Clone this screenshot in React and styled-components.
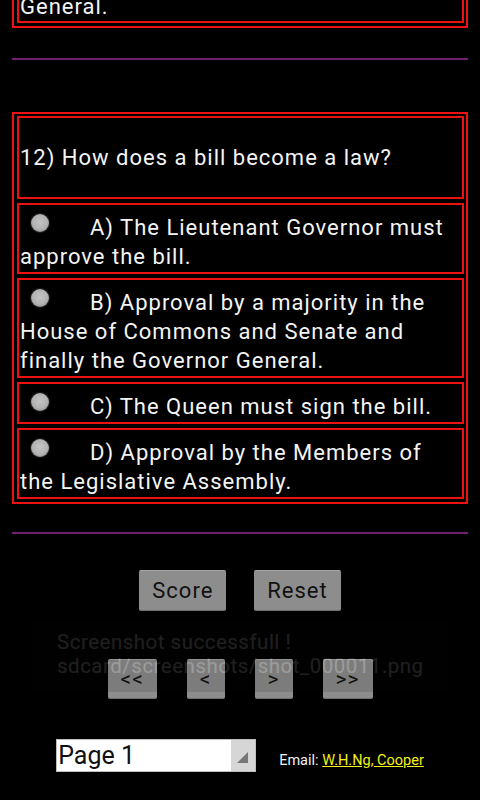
import React from 'react'
import styled, { createGlobalStyle } from 'styled-components'

const GlobalStyle = createGlobalStyle`
    html, body {
        margin: 0;
        padding: 0;
        background: #000;
    }
    body {
        width: 480px;
        height: 800px;
        overflow: hidden;
        font-family: Roboto, "Liberation Sans", sans-serif;
        color: #fff;
    }
`

const Page = styled.div`
    position: relative;
    width: 480px;
    height: 800px;
    overflow: hidden;
    display: flex;
    flex-direction: column;
`

const Table = styled.div`
    margin: ${props => props.top || 0}px 12px 0 12px;
    border: 2px solid #ee1111;
    padding: 2px 2px 3px 3px;
    display: flex;
    flex-direction: column;
    gap: 4px;
`

const Cell = styled.div`
    border: 2px solid #ee1111;
    padding: ${props => props.question ? '26px 0 25px 1px' : props.tail ? '0 0 0 1px' : '8px 0 1px 1px'};
    font-size: 22px;
    line-height: ${props => props.question ? 28 : 29}px;
    letter-spacing: 1px;
    color: #f4f4f4;
`

const Radio = styled.span`
    display: inline-block;
    vertical-align: top;
    width: 18px;
    height: 18px;
    margin: 1px 41px 0 11px;
    border-radius: 50%;
    background: radial-gradient(circle at 50% 45%, #c4c4c4 0%, #b2b2b2 55%, #8e8e8e 80%, #5a5a5a 100%);
    box-shadow: 0 0 1px 1px rgba(40,40,40,.8);
`

const Divider = styled.div`
    margin: ${props => props.top}px 12px 0 12px;
    height: 2px;
    background: #6e1f70;
`

const ButtonRow = styled.div`
    display: flex;
    justify-content: center;
    gap: ${props => props.gap}px;
    margin-top: ${props => props.top}px;
`

const Button = styled.div`
    height: ${props => props.small ? 40 : 41}px;
    padding: 0 13px;
    display: flex;
    align-items: center;
    justify-content: center;
    box-sizing: border-box;
    background: #8d8d8d;
    border-top: 1px solid #a6a6a6;
    border-bottom: 1px solid #6c6c6c;
    border-radius: 2px;
    box-shadow: 0 1px 2px rgba(0,0,0,.6);
    color: #111;
    font-size: ${props => props.small ? 21 : 22}px;
    letter-spacing: 1px;
`

const Footer = styled.div`
    display: flex;
    justify-content: center;
    align-items: center;
    gap: 23px;
    margin-top: 40px;
`

const Select = styled.div`
    width: 200px;
    height: 33px;
    box-sizing: border-box;
    display: flex;
    background: #fff;
    border: 1px solid #bdbdbd;
`

const SelectText = styled.div`
    flex: 1;
    padding-left: 1px;
    color: #111;
    font-size: 25px;
    line-height: 31px;
`

const SelectArrow = styled.div`
    width: 24px;
    background: #d6d6d6;
    display: flex;
    align-items: flex-end;
    justify-content: flex-end;
    padding: 0 7px 8px 0;
    box-sizing: border-box;
`

const Email = styled.div`
    padding-top: 9px;
    font-size: 14.5px;
    color: #f2f2f2;
    a {
        color: #f2f214;
        text-decoration: underline;
    }
`

const Toast = styled.div`
    position: absolute;
    left: 33px;
    top: 620px;
    width: 414px;
    height: 72px;
    box-sizing: border-box;
    padding: 10px 0 0 24px;
    background: #0c0c0c;
    opacity: 0.12;
    color: #fff;
    font-size: 20.5px;
    line-height: 24px;
    letter-spacing: 0.5px;
    white-space: nowrap;
`

const options = [
    'A) The Lieutenant Governor must approve the bill.',
    'B) Approval by a majority in the House of Commons and Senate and finally the Governor General.',
    'C) The Queen must sign the bill.',
    'D) Approval by the Members of the Legislative Assembly.',
]

const App = () => {
    return (
        <Page>
            <GlobalStyle />
            <Table top={-14}>
                <Cell tail>General.</Cell>
            </Table>
            <Divider top={30} />
            <Table top={52}>
                <Cell question>12) How does a bill become a law?</Cell>
                {options.map(o => (
                    <Cell key={o}><Radio />{o}</Cell>
                ))}
            </Table>
            <Divider top={28} />
            <ButtonRow top={36} gap={28}>
                <Button>Score</Button>
                <Button>Reset</Button>
            </ButtonRow>
            <ButtonRow top={48} gap={30}>
                <Button small>&lt;&lt;</Button>
                <Button small>&lt;</Button>
                <Button small>&gt;</Button>
                <Button small>&gt;&gt;</Button>
            </ButtonRow>
            <Footer>
                <Select>
                    <SelectText>Page 1</SelectText>
                    <SelectArrow>
                        <svg width="11" height="11" viewBox="0 0 11 11">
                            <polygon points="0,11 11,0 11,11" fill="#777" />
                        </svg>
                    </SelectArrow>
                </Select>
                <Email>Email: <a>W.H.Ng, Cooper</a></Email>
            </Footer>
            <Toast>
                Screenshot successfull !<br />
                sdcard/screenshots/shot_000011.png
            </Toast>
        </Page>
    )
}

export default App
